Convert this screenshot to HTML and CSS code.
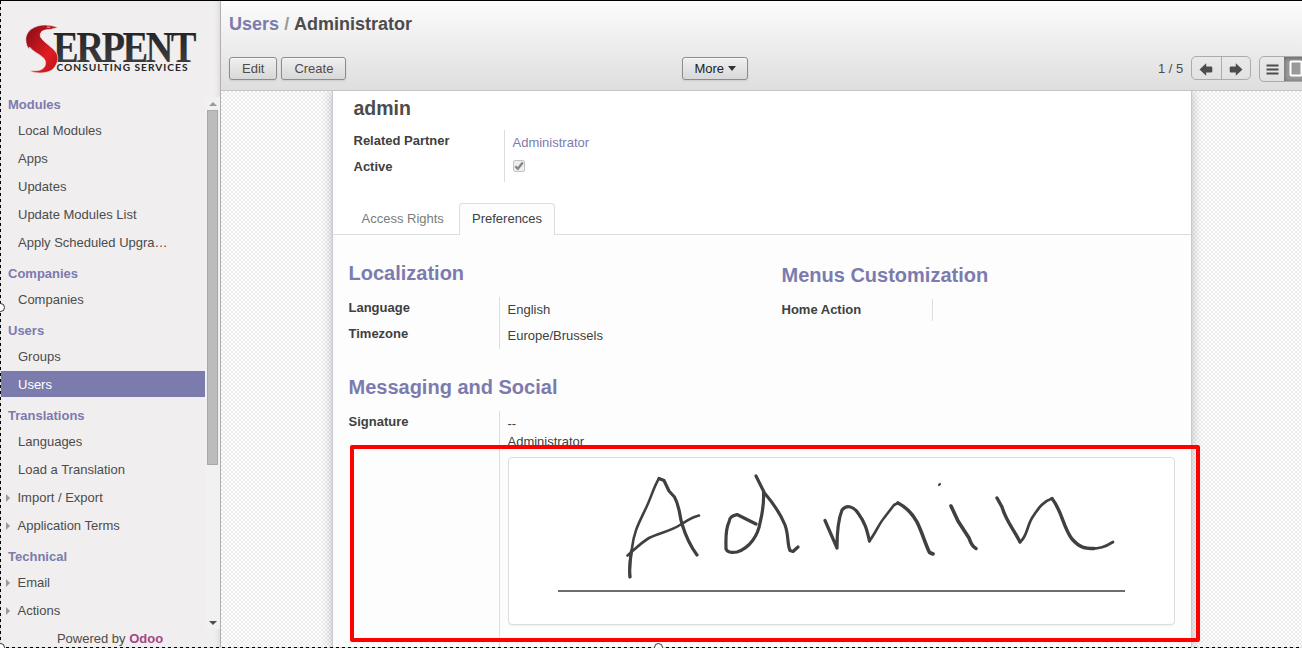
FILE: index.html
```html
<!DOCTYPE html>
<html lang="en">
<head>
<meta charset="utf-8">
<title>Users / Administrator</title>
<link rel="stylesheet" href="styles.css">
</head>
<body>
<div class="app">
  <aside class="sidebar">
    <svg class="logo" width="220" height="87" viewBox="0 1 220 87">
      <defs>
        <linearGradient id="red" x1="0" y1="0" x2="1" y2="1"><stop offset="0.1" stop-color="#8f0f16"/><stop offset="0.65" stop-color="#e31b23"/><stop offset="1" stop-color="#b5141b"/></linearGradient>
        <linearGradient id="ink" x1="0" y1="0" x2="0" y2="1"><stop offset="0" stop-color="#1c1c1e"/><stop offset="1" stop-color="#444447"/></linearGradient>
      </defs>
      <text class="logo-name" x="53" y="61.500" textLength="141" lengthAdjust="spacingAndGlyphs" fill="url(#ink)">ERPENT</text>
      <text class="logo-sub" x="56.500" y="71.300" textLength="131" lengthAdjust="spacing">CONSULTING SERVICES</text>
      <path fill="url(#red)" stroke="#f0eeee" stroke-width=".6" d="M58 27.500C53 25.500 47 24.500 41 25.300C31 27 25.500 33 25.800 40C26 44 27 47 29.500 49.200L29.600 47C33 52 40 54 44 58.500C48 64 44 70 38 70.500C35 71 32 70.500 30 71C35 73.500 46 74 52 70C57 66 59.500 58 56.500 53C53 47 44 43 40.500 37C39 32 43 29.500 50 29.600Z"/>
      <path d="M47 27l3 .3" stroke="#eee" stroke-width=".8"/>
    </svg>
    <div class="menu-wrap">
      <nav class="menu">
        <h4>Modules</h4><a>Local Modules</a><a>Apps</a><a>Updates</a><a>Update Modules List</a><a>Apply Scheduled Upgra…</a>
        <h4>Companies</h4><a>Companies</a>
        <h4>Users</h4><a>Groups</a><a class="active">Users</a>
        <h4>Translations</h4><a>Languages</a><a>Load a Translation</a><a class="parent">Import / Export</a><a class="parent">Application Terms</a>
        <h4>Technical</h4><a class="parent">Email</a><a class="parent">Actions</a>
      </nav>
      <div class="scrollbar"><i class="up"></i><div class="thumb"></div><i class="down"></i></div>
    </div>
    <div class="powered">Powered by <b>Odoo</b></div>
  </aside>
  <main class="main">
    <header class="control">
      <h1><span>Users</span> <em>/</em> Administrator</h1>
      <div class="toolbar">
        <div class="left"><button class="btn">Edit</button><button class="btn">Create</button></div>
        <button class="btn more">More <i class="caret"></i></button>
        <div class="right">
          <span>1 / 5</span>
          <div class="pager">
            <div><svg width="14" height="13" viewBox="0 0 14 13"><path d="M.5 6.500L7.200 .3V3.500H12Q13.300 3.500 13.300 4.800V8.200Q13.300 9.500 12 9.500H7.200V12.700Z" fill="#4c4c4c"/></svg></div>
            <div><svg width="14" height="13" viewBox="0 0 14 13"><path d="M13.500 6.500L6.800 .3V3.500H2Q.7 3.500 .7 4.800V8.200Q.7 9.500 2 9.500H6.800V12.700Z" fill="#4c4c4c"/></svg></div>
          </div>
          <div class="views">
            <div><svg width="13" height="11" viewBox="0 0 13 11"><path d="M.5 1.500h12M.5 5.500h12M.5 9.500h12" stroke="#4c4c4c" stroke-width="1.800"/></svg></div>
            <div class="on"><svg width="14" height="18" viewBox="0 0 14 18"><rect x="1.500" y="1.500" width="11" height="14" rx="1" fill="#999" stroke="#fff" stroke-width="2"/></svg></div>
          </div>
        </div>
      </div>
    </header>
    <section class="canvas">
      <div class="sheet">
        <h2 class="login">admin</h2>
        <div class="group top">
          <div class="labels"><b>Related Partner</b><b>Active</b></div>
          <div class="values"><span class="link">Administrator</span><span class="check"><svg width="10" height="10" viewBox="0 0 10 10"><path d="M1.300 5.300L3.800 7.800L8.800 1.500" fill="none" stroke="#868686" stroke-width="2.300"/></svg></span></div>
        </div>
        <div class="tabs"><div class="tab">Access Rights</div><div class="tab selected">Preferences</div></div>
        <div class="page">
          <div class="columns">
            <div class="col">
              <h3>Localization</h3>
              <div class="group"><div class="labels"><b>Language</b><b>Timezone</b></div><div class="values"><span>English</span><span>Europe/Brussels</span></div></div>
            </div>
            <div class="col second">
              <h3>Menus Customization</h3>
              <div class="group"><div class="labels"><b>Home Action</b></div><div class="values"></div></div>
            </div>
          </div>
          <h3>Messaging and Social</h3>
          <div class="group sign">
            <div class="labels"><b>Signature</b></div>
            <div class="values">
              <p>--<br>Administrator</p>
              <div class="sigbox">
                <svg width="665" height="166" viewBox="509 458 665 166">
                  <path d="M558 591H1125" stroke="#6d6d6d" stroke-width="2"/>
                  <g fill="none" stroke="#404040" stroke-linecap="round" stroke-linejoin="round">
                    <path stroke-width="2.600" d="M630 577C629 567 630 559 632 548C634 531 639 523 646 508C651 498 654 486 659 478.500M627.500 555.500C635 549 642 542 649 538C659 533 671 531 680 525C688 520 692 517 699 515.500"/>
                    <path stroke-width="3.200" d="M630 577C629 567 630 560 631.500 551M659 478.500L664 480.500L669 491L674.500 497C680 507 679 514 682 524C686 537 691 547 697 555"/>
                    <path stroke-width="3.200" d="M756 524L737 514.500C732 516 729.500 517 729 522C725 530 726 540 726 549C728 553 732 553 737 552C750 548 758 535 760 523C763 511 764 501 763.500 491M756 476L764.500 493C773 503 781 515 785 525C789 536 787 544 790 550.500L793 551.500L798 547"/>
                    <path stroke-width="3.200" d="M825 520.500L837 548C837 533 838 520 842 510C847 504 854 507 858 513C866 524 867 531 869.500 541"/>
                    <path stroke-width="2.600" d="M869.500 541C876 532 879 524 884 518L894 505L898 503"/>
                    <path stroke-width="3.600" d="M898 503C906 507 912 513 917 522C922 532 925 543 929.500 552.500L933 554M951 506L958 521L969 538C971 544 973 547 976 548.500"/>
                    <path stroke-width="2.200" d="M939 485L940 484"/>
                    <path stroke-width="3.400" d="M997 498L1002 507C1006 521 1013 528 1020 542"/>
                    <path stroke-width="2.700" d="M1020 542C1027 537 1027 526 1032 518C1039 507 1044 501 1052 498.500"/>
                    <path stroke-width="3.400" d="M1052 498.500C1062 511 1063 527 1072 539C1080 548 1085 548.500 1094 548.500"/>
                    <path stroke-width="2.700" d="M1088 548.500C1100 549 1105 547 1113 542"/>
                  </g>
                </svg>
              </div>
            </div>
          </div>
        </div>
      </div>
    </section>
  </main>
  <div class="highlight"></div>
  <div class="edge-left"></div><div class="edge-bottom"></div>
  <i class="handle h1"></i><i class="handle h2"></i><i class="handle h3"></i>
</div>
</body>
</html>
```
FILE: styles.css
```css
* { box-sizing: border-box; }
body { margin: 0; overflow: hidden; background: #fff; font: 13px/18px "Liberation Sans", Arial, sans-serif; color: #4c4c4c; }
h1, h2, h3, h4, p { margin: 0; }
.app { position: relative; display: flex; width: 1302px; height: 649px; border-top: 1px solid #000; border-bottom: 1px solid #fff; overflow: hidden; }

.sidebar { width: 221px; flex: none; background: #f0eeee; border-right: 1px solid #afafb6; box-shadow: inset -5px 0 6px -5px rgba(0,0,0,.12); }
.logo { display: block; }
.logo-name { font: bold 45px "Liberation Serif", serif; letter-spacing: -3px; }
.logo-sub { font: bold 10.2px Lato, sans-serif; fill: #262626; }
.menu-wrap { display: flex; height: 541px; }
.menu { width: 205px; }
.menu h4 { height: 29px; padding: 8px 0 0 8px; font-size: 13px; line-height: 18px; color: #7c7bad; }
.menu a { display: block; height: 26px; margin-bottom: 2px; padding: 1px 0 0 18px; line-height: 26px; white-space: nowrap; }
.menu .active { background: #7c7bad; color: #fff; }
.menu .parent { display: flex; align-items: center; padding-left: 6px; }
.menu .parent::before { content: ""; width: 0; margin-right: 7.5px; border: 4px solid transparent; border-left-color: #999; border-right: 0; }
.scrollbar { display: flex; flex-direction: column; align-items: center; width: 15px; margin-top: 9px; background: #f1f1f1; }
.scrollbar .up { margin-top: 5px; border: 4px solid transparent; border-top: 0; border-bottom-color: #9a9a9a; }
.thumb { width: 11px; height: 355px; margin-top: 4px; background: #bcbcbc; border: 1px solid #a8a8a8; }
.scrollbar .down { margin: auto 0 4px; border: 4px solid transparent; border-bottom: 0; border-top-color: #505050; }
.powered { padding-top: 1px; text-align: center; line-height: 18px; }
.powered b { color: #a24689; }

.main { flex: 1; min-width: 0; display: flex; flex-direction: column; }
.control { height: 90px; flex: none; padding: 14px 0 0 8px; border-bottom: 1px solid #c5c5c8; background: linear-gradient(#fcfcfc, #dedede); }
.control h1 { font-size: 18px; line-height: 18px; word-spacing: .3px; }
.control h1 span { color: #7c7bad; }
.control h1 em { font-style: normal; color: #999; }
.toolbar { display: flex; margin-top: 23px; }
.left { display: flex; flex: none; gap: 4px; width: 453px; padding-top: 1px; }
.btn { flex: none; height: 23px; padding: 0 12px; border: 1px solid #8c8c8c; border-radius: 3px; background: linear-gradient(#efefef, #d8d8d8); box-shadow: 0 1px 2px rgba(0,0,0,.1), inset 0 1px rgba(255,255,255,.7); font: 13px/20px "Liberation Sans", Arial, sans-serif; color: #4c4c4c; white-space: nowrap; }
.more { width: 66px; margin-top: 1px; color: #222; padding: 0; }
.caret { display: inline-block; margin-bottom: 2px; border: 4px solid transparent; border-top: 5px solid #333; border-bottom: 0; }
.right { display: flex; flex: none; align-items: flex-start; margin-left: 410px; }
.right > span { width: 33px; line-height: 26px; white-space: nowrap; }
.pager { display: flex; height: 24px; width: 60px; flex: none; border: 1px solid #ababab; border-radius: 5px; }
.pager div { display: flex; align-items: center; justify-content: center; flex: 1; padding-top: 3px; }
.pager div + div { border-left: 1px solid #ababab; }
.views { display: flex; width: 52px; height: 26px; flex: none; margin-left: 8px; border: 1px solid #ababab; border-radius: 5px; overflow: hidden; }
.views div { width: 24px; flex: none; display: flex; align-items: center; justify-content: center; }
.views .on { width: 28px; justify-content: flex-start; padding-left: 5px; background: #999; box-shadow: inset 0 1px 4px rgba(0,0,0,.4); }

.canvas { flex: 1; min-height: 0; overflow: hidden; padding-left: 111px; background: repeating-conic-gradient(#ebebeb 0 25%, #fff 0 50%) 0 0 / 4px 4px; }
.sheet { width: 860px; height: 557px; background: #fff; border: 1px solid #c8c8d3; border-top: 0; border-bottom: 0; box-shadow: 0 0 10px rgba(0,0,0,.25); }
.login { padding: 7px 0 0 20.500px; font-size: 19.500px; line-height: 20px; }
.group { display: flex; color: #404040; }
.labels { width: 150px; flex: none; }
.labels b { display: block; height: 26px; line-height: 22px; }
.values { flex: 1; border-left: 1px solid #ddd; padding-left: 8px; }
.values > span { display: block; height: 26px; line-height: 26px; }
.top { margin: 12px 0 0 20.500px; }
.values .link { color: #7c7bad; }
.values > .check { display: flex; align-items: center; justify-content: center; width: 12px; height: 12px; margin-top: 4px; margin-bottom: 10px; border: 1px solid #c4c4c4; border-radius: 2px; background: #eee; }
.tabs { display: flex; height: 32px; margin-top: 21px; padding-left: 16px; border-bottom: 1px solid #ddd; }
.tab { width: 110px; padding: 7px 0 0 12.500px; height: 32px; color: #7b7b7b; }
.tab.selected { width: 96px; padding: 6px 0 0 12px; border: 1px solid #ddd; border-bottom: 0; border-radius: 4px 4px 0 0; background: #fdfdfd; color: #404040; }
.page { height: 415px; padding: 28px 0 0 15.500px; background: #fdfdfd; }
.page h3 { font-size: 20px; line-height: 20px; color: #7c7bad; }
.columns { display: flex; height: 114px; }
.col { width: 433px; flex: none; }
.second { width: 400px; }
.col .group { margin-top: 14px; }
.second { padding-top: 2px; }
.second .values { min-height: 22px; max-height: 22px; }
.sign { margin-top: 14px; height: 240px; }
.sign p { padding-top: 4px; height: 46px; }
.sigbox { width: 667px; height: 168px; border: 1px solid #ddd; border-radius: 4px; box-shadow: 0 1px 1px rgba(0,0,0,.05); background: #fff; }
.sigbox svg { display: block; }

/* overlay marks */
.highlight { position: absolute; left: 350px; top: 444px; width: 850px; height: 197px; border: 4px solid #f00; border-radius: 2px; }
.edge-left { position: absolute; left: 0; top: 0; width: 1px; height: 647px; background: repeating-linear-gradient(#000 0 3px, #ddd 3px 6px); }
.edge-bottom { position: absolute; left: 0; top: 646px; width: 1302px; height: 1px; background: repeating-linear-gradient(90deg, #000 0 3px, #ddd 3px 6px); }
.handle { position: absolute; width: 9px; height: 9px; border: 1px solid #333; border-radius: 50%; background: #fff; }
.h1 { left: -4px; top: 302px; }
.h2 { left: -4px; top: 642px; }
.h3 { left: 654px; top: 642px; }
```
